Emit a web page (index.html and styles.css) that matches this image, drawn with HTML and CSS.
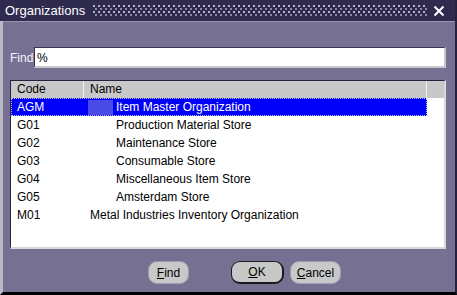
FILE: index.html
```html
<!DOCTYPE html>
<html>
<head>
<meta charset="utf-8">
<link rel="stylesheet" href="styles.css">
</head>
<body>
<div class="win">
  <div class="titlebar">
    <span class="title">Organizations</span>
    <span class="dots"></span>
    <svg class="close" width="12" height="12" viewBox="0 0 12 12"><path d="M1.5 1.5 L10.5 10.5 M10.5 1.5 L1.5 10.5" stroke="#fff" stroke-width="2" fill="none"/></svg>
  </div>
  <div class="body">
    <div class="findrow">
      <span class="label">Find</span>
      <div class="input">%</div>
    </div>
    <div class="list">
      <div class="head">
        <div class="c1">Code</div>
        <div class="c2">Name</div>
        <div class="c3"></div>
      </div>
      <div class="rows">
        <div class="row sel"><div class="c1">AGM</div><div class="c2"><span class="ind hl"></span>Item Master Organization</div></div>
        <div class="row"><div class="c1">G01</div><div class="c2"><span class="ind"></span>Production Material Store</div></div>
        <div class="row"><div class="c1">G02</div><div class="c2"><span class="ind"></span>Maintenance Store</div></div>
        <div class="row"><div class="c1">G03</div><div class="c2"><span class="ind"></span>Consumable Store</div></div>
        <div class="row"><div class="c1">G04</div><div class="c2"><span class="ind"></span>Miscellaneous Item Store</div></div>
        <div class="row"><div class="c1">G05</div><div class="c2"><span class="ind"></span>Amsterdam Store</div></div>
        <div class="row"><div class="c1">M01</div><div class="c2">Metal Industries Inventory Organization</div></div>
      </div>
    </div>
    <div class="buttons">
      <div class="btn find"><u>F</u>ind</div>
      <div class="btn ok"><u>O</u>K</div>
      <div class="btn cancel"><u>C</u>ancel</div>
    </div>
  </div>
</div>
</body>
</html>
```
FILE: styles.css
```css
* { box-sizing: border-box; }
html, body { margin: 0; padding: 0; background: #000; }
body { font-family: "Liberation Sans", Arial, sans-serif; font-size: 12px; }
.win {
  width: 457px; height: 295px;
  display: flex; flex-direction: column;
  background: #767193;
  border-left: 3px solid #b9b8c4;
  border-right: 2px solid #26223c;
  border-bottom: 3px solid #000;
}
.titlebar {
  height: 21px; flex: none;
  background: #2f2b4f;
  display: flex; align-items: center;
  margin-left: -3px; padding-left: 5px; padding-right: 10px;
}
.title { color: #fff; font-size: 13px; }
.dots {
  flex: 1; height: 11px; margin: 0 6px 0 8px;
  background-image:
    radial-gradient(circle at 1px 1px, #b8b6c8 0.7px, transparent 1px),
    radial-gradient(circle at 1px 1px, #8e8ba6 0.7px, transparent 1px);
  background-size: 5px 6px, 5px 6px;
  background-position: 0 0, 2px 3px;
}
.close { flex: none; }
.body {
  flex: 1;
  display: flex; flex-direction: column;
  padding: 25px 9px 0 7px;
  border-top: 1px solid #9a96b0;
}
.findrow { display: flex; align-items: center; height: 21px; }
.label { color: #f4f4f8; width: 24px; font-size: 12px; }
.input {
  flex: 1; height: 21px; background: #fff;
  border-top: 1px solid #3a3650; border-left: 1px solid #3a3650;
  border-right: 2px solid #c8c8c8; border-bottom: 2px solid #c8c8c8;
  padding: 3px 2px; color: #000; line-height: 14px;
}
.list {
  margin-top: 12px; height: 169px;
  background: #fff;
  border-top: 1px solid #26223a; border-left: 1px solid #26223a;
  border-right: 2px solid #d8d8dc; border-bottom: 2px solid #d8d8dc;
  display: flex; flex-direction: column;
}
.head { display: flex; height: 17px; background: #c8c8c8; line-height: 17px; color: #000; }
.head .c1 { width: 73px; padding-left: 6px; border-right: 1px solid #f0f0f0; }
.head .c2 { width: 343px; padding-left: 6px; border-right: 1px solid #f0f0f0; }
.head .c3 { flex: 1; }
.rows { display: flex; flex-direction: column; }
.row { display: flex; height: 18px; line-height: 18px; width: 416px; color: #000; }
.row .c1 { width: 73px; padding-left: 6px; }
.row .c2 { flex: 1; padding-left: 6px; display: flex; align-items: center; }
.ind { width: 26px; height: 15px; flex: none; }
.ind.hl { background: #4a4ae6; margin-left: -2px; margin-right: 3px; width: 25px; }
.row.sel { background: #0000f8; color: #fff; outline: 1px dotted #c0c0ff; outline-offset: -1px; }
.buttons { display: flex; align-items: center; margin-top: 12px; padding-left: 138px; }
.btn {
  height: 23px; background: #c8c8c8; border-radius: 9px;
  display: flex; align-items: center; justify-content: center;
  color: #000; font-size: 12px;
  border: 1px solid #9e9cae;
}
.find { width: 41px; }
.ok { width: 53px; margin-left: 42px; border: 1px solid #1a1a1a; border-right-width: 2px; border-bottom-width: 2px; }
.cancel { width: 51px; margin-left: 6px; }
```
